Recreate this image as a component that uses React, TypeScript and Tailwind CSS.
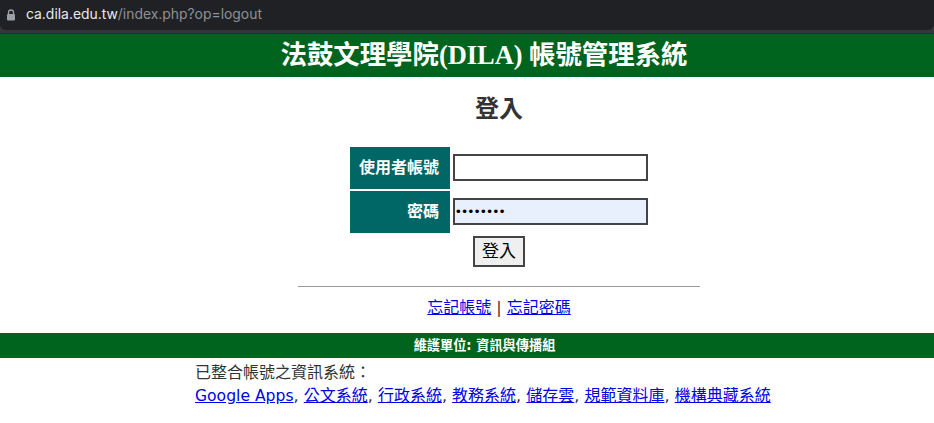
import React from "react";

function Link({ children }: { children: React.ReactNode }) {
  return <a href="#" className="text-[#0000ee] underline">{children}</a>;
}

export default function App() {
  const systems = ["公文系統", "行政系統", "教務系統", "儲存雲", "規範資料庫", "機構典藏系統"];
  return (
    <div className="w-[934px] h-[423px] overflow-hidden bg-white text-[#333] font-['DejaVu_Sans','Noto_Sans_CJK_TC',sans-serif]">
      <div className="h-[34px] bg-[#35363a] border-b border-[#2a2b2e]">
        <div className="h-[30px] bg-[#202124] flex items-center pl-[6px] rounded-b-[6px]">
          <svg width="10" height="12" viewBox="0 0 10 12" className="shrink-0">
            <path d="M2.5 5V3.5a2.5 2.5 0 0 1 5 0V5" fill="none" stroke="#9aa0a6" strokeWidth="1.3" />
            <rect x="1" y="5" width="8" height="6.5" rx="1" fill="#9aa0a6" />
          </svg>
          <div className="ml-[10px] text-[13.9px] leading-none font-['Inter',sans-serif]">
            <span className="text-[#e8eaed]">ca.dila.edu.tw</span>
            <span className="text-[#8e9196]">/index.php?op=logout</span>
          </div>
        </div>
      </div>
      <div className="h-[43px] bg-[#00641e] flex items-center justify-center pl-[34px] text-white text-[26.4px] font-bold font-['Liberation_Serif','Noto_Sans_CJK_TC',serif]">
        法鼓文理學院(DILA) 帳號管理系統
      </div>
      <div className="flex flex-col items-center pl-[64px]">
        <h2 className="mt-[16px] h-[32px] leading-[32px] text-[24px] font-bold text-[#333]">登入</h2>
        <div className="mt-[22px] flex flex-col gap-[2px]">
          <div className="flex items-center">
            <div className="w-[100px] h-[42px] bg-[#006666] text-white font-bold text-[16px] flex items-center justify-end pr-[11px]">使用者帳號</div>
            <input type="text" className="ml-[3px] mb-[2px] w-[195px] h-[27px] bg-white border-2 border-[#444] outline-none" />
          </div>
          <div className="flex items-center">
            <div className="w-[100px] h-[42px] bg-[#006666] text-white font-bold text-[16px] flex items-center justify-end pr-[11px]">密碼</div>
            <input type="password" defaultValue="12345678" className="ml-[3px] mb-[2px] w-[195px] h-[27px] bg-[#e8f0fe] border-2 border-[#444] outline-none px-[1px] text-[13.33px] tracking-[1.6px] text-black font-['Liberation_Sans',sans-serif]" />
          </div>
        </div>
        <button className="mt-[3px] w-[52px] h-[31px] bg-[#efefef] border-2 border-[#444] text-[17px] text-black leading-none">登入</button>
        <hr className="mt-[19px] w-[402px] border-0 border-t border-[#999] h-0" />
        <div className="mt-[11px] h-[20px] leading-[20px] text-[16px]">
          <Link>忘記帳號</Link> | <Link>忘記密碼</Link>
        </div>
      </div>
      <div className="mt-[15px] h-[25px] bg-[#00641e] flex items-center justify-center pl-[35px] text-white text-[13.2px] font-bold">維護單位: 資訊與傳播組</div>
      <div className="pl-[195px] pt-[3px] text-[16px] leading-[23px]">
        <div>已整合帳號之資訊系統：</div>
        <div>
          <span className="text-[15.6px]"><Link>Google Apps</Link></span>
          {systems.map((s) => (
            <span key={s}>, <Link>{s}</Link></span>
          ))}
        </div>
      </div>
    </div>
  );
}
